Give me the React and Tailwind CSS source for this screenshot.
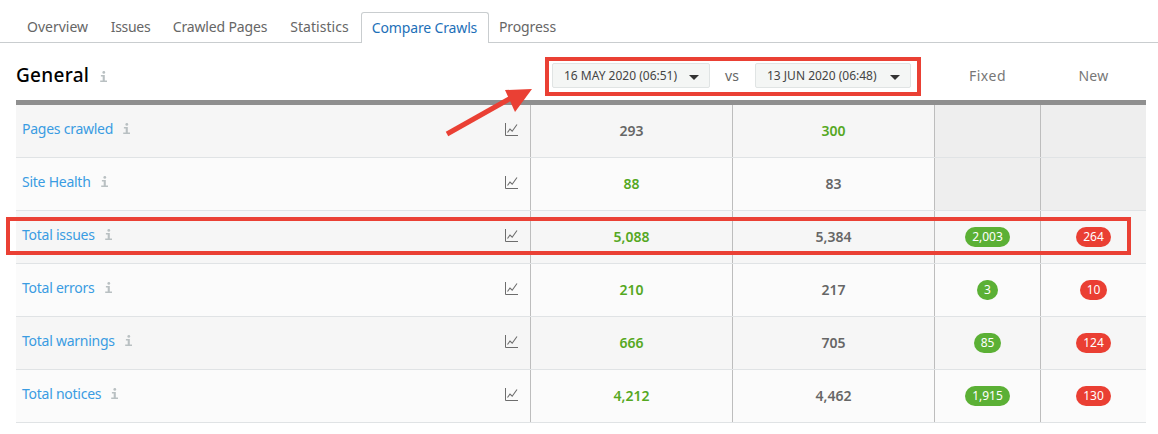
import React from "react";

const font = { fontFamily: '"Noto Sans", sans-serif' };

function Info({ className = "" }) {
  return (
    <svg width="7" height="11" viewBox="0 0 7 11" className={"inline-block shrink-0 " + className}>
      <circle cx="3.8" cy="1.4" r="1.4" fill="#b9c0c2" />
      <path d="M.9 3.9h3.9v5.6H7V11H.2V9.5h2.5V5.4H.9z" fill="#b9c0c2" />
    </svg>
  );
}

function ChartIcon() {
  return (
    <svg width="13" height="13" viewBox="0 0 13 13" fill="none" className="shrink-0">
      <path d="M.5 0v12.5H13" stroke="#6d6d6d" strokeWidth="1" />
      <path d="M2.5 9.5 5 6l2.2 2.2L12 1.5" stroke="#6d6d6d" strokeWidth="1.1" />
    </svg>
  );
}

function Caret() {
  return <span className="ml-auto mt-[4px] w-0 h-0 border-x-[5px] border-x-transparent border-t-[5px] border-t-[#333]" />;
}

function Select({ label, w }) {
  return (
    <div className={"h-[25px] flex items-center pl-[11px] pr-[10px] bg-[#f4f6f5] border border-[#e0e4e4] rounded-[2px] text-[12px] text-[#444] whitespace-nowrap " + w}>
      <span>{label}</span>
      <Caret />
    </div>
  );
}

function Badge({ color, children, w }) {
  return (
    <span className={"h-5 inline-flex items-center justify-center rounded-full text-white text-[12px] " + color + " " + w}>
      {children}
    </span>
  );
}

const rows = [
  { name: "Pages crawled", a: "293", b: "300", win: "b", bg: "bg-[#f6f6f6]" },
  { name: "Site Health", a: "88", b: "83", win: "a", bg: "bg-[#fbfbfb]" },
  { name: "Total issues", a: "5,088", b: "5,384", win: "a", fixed: "2,003", fw: "w-[45px]", nw: "264", nww: "w-[35px]", bg: "bg-[#f6f6f6]" },
  { name: "Total errors", a: "210", b: "217", win: "a", fixed: "3", fw: "w-[21px]", nw: "10", nww: "w-[27px]", bg: "bg-[#fbfbfb]" },
  { name: "Total warnings", a: "666", b: "705", win: "a", fixed: "85", fw: "w-[27px]", nw: "124", nww: "w-[35px]", bg: "bg-[#f6f6f6]" },
  { name: "Total notices", a: "4,212", b: "4,462", win: "a", fixed: "1,915", fw: "w-[45px]", nw: "130", nww: "w-[35px]", bg: "bg-[#fbfbfb]" },
];

const tabs = [
  { t: "Overview", w: "w-[84px]", x: "" },
  { t: "Issues", w: "w-[62px]", x: "tracking-[-0.3px]" },
  { t: "Crawled Pages", w: "w-[117px]", x: "tracking-[-0.15px]" },
  { t: "Statistics", w: "w-[82px]", x: "tracking-[0.05px]" },
];

const cols = "grid grid-cols-[515px_202px_202px_106px_105px]";

export default function App() {
  return (
    <div style={font} className="relative w-[1158px] h-[434px] bg-white overflow-hidden">
      {/* Tabs */}
      <div className="h-[43px] pt-3 pl-[16px] flex items-stretch border-b border-[#c9cdcf] text-[14px] text-[#666]">
        {tabs.map((t) => (
          <div key={t.t} className={"pt-[4px] pr-[1px] text-center " + t.w + " " + t.x}>{t.t}</div>
        ))}
        <div className="h-[31px] w-[128px] text-center pt-[4px] pr-[1px] bg-white border border-b-0 border-[#c9cdcf] rounded-t-[3px] text-[#1d70b8] tracking-[-0.15px]">Compare Crawls</div>
        <div className="w-[78px] text-center pt-[4px] pr-[1px] tracking-[-0.1px]">Progress</div>
      </div>

      {/* Section header */}
      <div className="h-[57px] ml-[16px] w-[1130px] flex items-start">
        <div className="w-[515px] flex items-center h-[64px] gap-[11px]">
          <span className="text-[19px] font-medium text-black tracking-[0.3px]">General</span>
          <Info className="mt-[2px]" />
        </div>
        <div className="w-[404px] pt-[20px] pl-[21px] flex items-center text-[14px] text-[#666]">
          <Select label="16 MAY 2020 (06:51)" w="w-[158px]" />
          <span className="w-[45px] text-center pr-[1px]">vs</span>
          <Select label="13 JUN 2020 (06:48)" w="w-[156px]" />
        </div>
        <div className="w-[106px] pt-[22px] pr-[1px] text-center text-[14px] text-[#777] tracking-[0.5px]">Fixed</div>
        <div className="w-[105px] pt-[22px] text-center text-[14px] text-[#777] tracking-[0.3px]">New</div>
      </div>

      {/* Table */}
      <div className="ml-[16px] w-[1130px] border-t-[5px] border-[#8f8f8f]">
        {rows.map((r) => (
          <div key={r.name} className={cols + " h-[53px] border-b border-[#e0e3e5] " + r.bg}>
            <div className="flex items-center pl-[6px] pr-[12px] border-r border-[#bdbdbd] pb-[3px]">
              <span className="text-[14px] text-[#3a9ce2] tracking-[-0.25px] -mt-[3px]">{r.name}</span>
              <Info className="ml-[10px] -mt-[2px]" />
              <span className="ml-auto"><ChartIcon /></span>
            </div>
            <div className={"flex items-center justify-center border-r border-[#bdbdbd] text-[14px] font-semibold pb-[2px] " + (r.win === "a" ? "text-[#55a81f]" : "text-[#666]")}>{r.a}</div>
            <div className={"flex items-center justify-center border-r border-[#bdbdbd] text-[14px] font-semibold pb-[2px] " + (r.win === "b" ? "text-[#55a81f]" : "text-[#666]")}>{r.b}</div>
            <div className={"flex items-center justify-center border-r border-[#bdbdbd] " + (r.fixed ? "" : "bg-[#eeeeee]")}>
              {r.fixed && <Badge color="bg-[#5bb035]" w={r.fw}>{r.fixed}</Badge>}
            </div>
            <div className={"flex items-center justify-center " + (r.nw ? "" : "bg-[#eeeeee]")}>
              {r.nw && <Badge color="bg-[#ea3f33]" w={r.nww}>{r.nw}</Badge>}
            </div>
          </div>
        ))}
      </div>

      {/* Annotations */}
      <div className="absolute left-[545px] top-[57px] w-[376px] h-[39px] border-[4px] border-[#ea4034]" />
      <div className="absolute left-[6px] top-[217px] w-[1125px] h-[38px] border-[4px] border-[#ea4034]" />
      <svg className="absolute left-[440px] top-[85px]" width="100" height="55" viewBox="0 0 100 55" fill="none">
        <path d="M7 49 71 13" stroke="#ea4034" strokeWidth="5" />
        <path d="M92 4 65 5l10 22z" fill="#ea4034" />
      </svg>
    </div>
  );
}
